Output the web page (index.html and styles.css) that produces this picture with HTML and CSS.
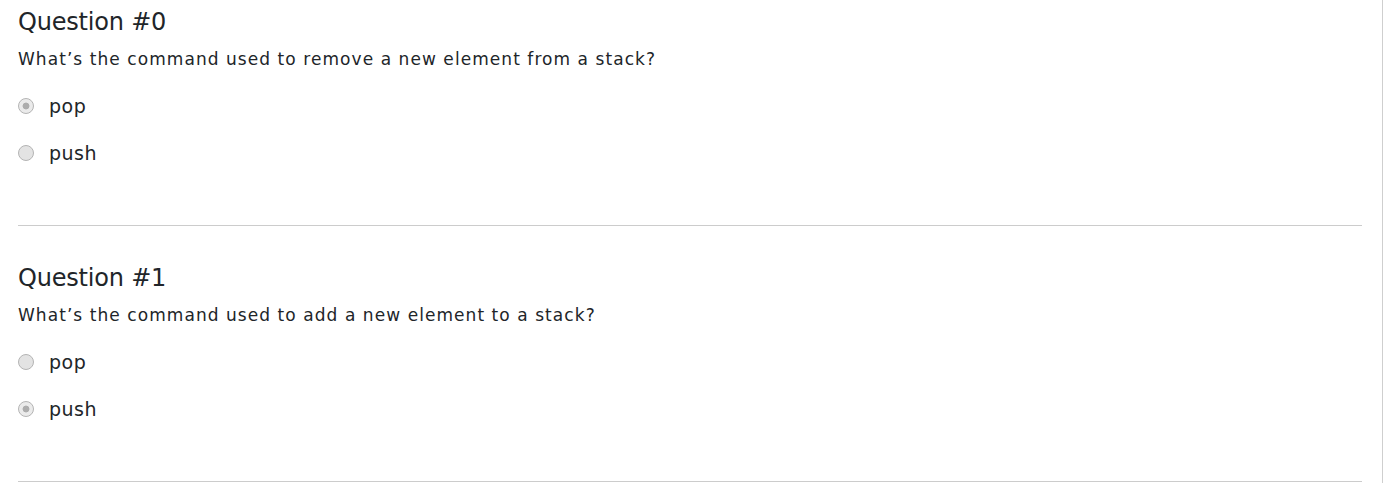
FILE: index.html
```html
<!DOCTYPE html>
<html lang="en">
<head>
<meta charset="utf-8">
<title>Quiz</title>
<link rel="stylesheet" href="styles.css">
</head>
<body>
<main class="page">
  <section class="question">
    <h2 class="question-title">Question #0</h2>
    <p class="question-text">What’s the command used to remove a new element from a stack?</p>
    <div class="options">
      <label class="option"><input type="radio" name="q0" checked disabled><span>pop</span></label>
      <label class="option"><input type="radio" name="q0" disabled><span>push</span></label>
    </div>
    <hr class="divider">
  </section>
  <section class="question">
    <h2 class="question-title">Question #1</h2>
    <p class="question-text">What’s the command used to add a new element to a stack?</p>
    <div class="options">
      <label class="option"><input type="radio" name="q1" disabled><span>pop</span></label>
      <label class="option"><input type="radio" name="q1" checked disabled><span>push</span></label>
    </div>
    <hr class="divider">
  </section>
</main>
</body>
</html>
```
FILE: styles.css
```css
* { box-sizing: border-box; }
html, body { margin: 0; padding: 0; background: #fff; }
body {
  font-family: "DejaVu Sans", "Open Sans", sans-serif;
  color: #212529;
  overflow: hidden;
}
.page {
  width: 1383px;
  height: 483px;
  border-right: 1px solid #cfcfcf;
  padding: 0 20px 0 18px;
}
.question {
  padding-top: 8px;
  display: flex;
  flex-direction: column;
}
.question + .question {
  padding-top: 38px;
}
.question-title {
  margin: 0;
  font-size: 24px;
  font-weight: 400;
  line-height: 29px;
  letter-spacing: -0.2px;
}
.question-text {
  margin: 10px 0 0;
  font-size: 17px;
  line-height: 25px;
  letter-spacing: 1.06px;
}
.options {
  display: flex;
  flex-direction: column;
  gap: 19px;
  margin-top: 20px;
}
.option {
  display: flex;
  align-items: center;
  height: 28px;
  font-size: 19px;
  gap: 15px;
  letter-spacing: 0.5px;
}
.option input {
  appearance: none;
  -webkit-appearance: none;
  margin: 0;
  width: 16px;
  height: 16px;
  border-radius: 50%;
  border: 1px solid #b4b4b4;
  background: #e3e3e3;
}
.option input:checked {
  background: radial-gradient(circle, #adadad 0 3px, #ebebeb 3.8px);
}
.divider {
  margin: 58px 0 0;
  border: 0;
  border-top: 1px solid #cccccc;
  height: 0;
}
```
